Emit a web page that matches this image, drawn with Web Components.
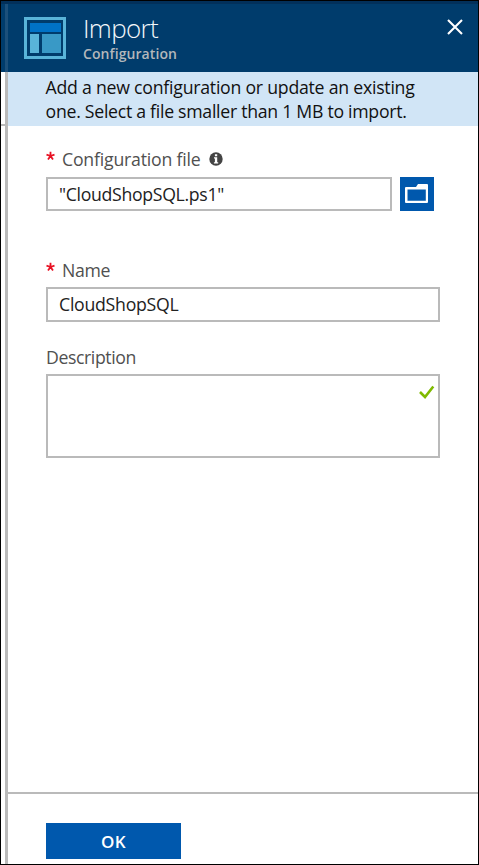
<!DOCTYPE html>
<html lang="en"><head><meta charset="utf-8"><title>Import Configuration</title>
<style>
html,body{margin:0;height:100%}
body{font-family:"Open Sans","Noto Sans",sans-serif;font-size:17.7px;overflow:hidden}
</style></head><body>
<import-blade></import-blade>
<script>
// A single line of text whose tracking is adjusted to a given width.
class FitText extends HTMLElement{
  connectedCallback(){
    const root=this.attachShadow({mode:'open'});
    root.innerHTML='<style>:host{display:block;white-space:nowrap;width:max-content}span{display:block}</style><span><slot></slot></span>';
    const s=root.querySelector('span'),w=+this.getAttribute('width'),n=this.textContent.length;
    s.style.letterSpacing=((w-s.getBoundingClientRect().width)/n)+'px';
  }
}
customElements.define('fit-text',FitText);

const define=(name,html)=>customElements.define(name,class extends HTMLElement{
  constructor(){super();this.attachShadow({mode:'open'}).innerHTML=html}
});

define('blade-header',`<style>
:host{display:flex;box-sizing:border-box;height:71px;background:#003c6c;border-top:3px solid #02305a;color:#fff}
.edge{width:3px;margin-left:4px;background:#1c507b}
.logo{margin:13px 0 0 16.4px;width:42px;height:42px}
.titles{flex:1;padding-left:16.6px}
h1{margin:8px 0 0;font-weight:300;font-size:26px;line-height:32px;color:#f4f8fb}
h2{margin:1px 0 0;font-size:14px;font-weight:600;line-height:18px;color:#b3b7bb}
.close{margin:15px 15px 0 0;width:16px;height:16px}
</style>
<div class="edge"></div>
<svg class="logo" viewBox="0 0 42 42"><path fill="#59b4d9" fill-rule="evenodd" d="M0 0h42v42H0zM3 3v36h36V3z"/><path fill="#0072c6" d="M6 6h31v9H6z"/><path fill="#59b4d9" d="M6 17h9v19H6z"/><path fill="#3999c6" d="M18 17h19v19H18z"/></svg>
<div class="titles"><h1><fit-text width="75">Import</fit-text></h1><h2><fit-text width="94">Configuration</fit-text></h2></div>
<svg class="close" viewBox="0 0 16 16"><path d="M1 1l14 14M15 1L1 15" stroke="#fff" stroke-width="2.1"/></svg>`);

define('info-band',`<style>:host{display:block;box-sizing:border-box;height:54px;padding:3px 0 0 37.6px;background:#d1e5f6;color:#111;line-height:24px}</style><slot></slot>`);

define('field-label',`<style>
:host{display:flex;align-items:center;height:24px;color:#505050}
b{display:none;width:10px;height:24px;margin-right:6px}
:host([required]) b{display:block}
svg{display:block}
.info{display:none;margin-left:8.5px}
:host([info]) .info{display:block}
</style><b><svg width="10" height="24" viewBox="0 0 10 24"><path d="M4.5 9V4.8M4.5 9L.5 7.7M4.5 9l4-1.3M4.5 9L2 12.5M4.5 9L7 12.5" fill="none" stroke="#e81123" stroke-width="1.8"/></svg></b><slot></slot>
<svg class="info" width="14" height="14" viewBox="0 0 14 14"><circle cx="7" cy="7" r="6.7" fill="#444"/><path fill="#fff" d="M5.9 2.2h2.3v2H5.9zM5 5.3h3.2v5h1v1.3H4.9v-1.3h1V6.5H5z"/></svg>`);

define('text-box',`<style>
:host{display:block;box-sizing:border-box;height:34px;border:2px solid #bababa;background:#fff;padding-left:11px;line-height:30px;color:#222;position:relative}
</style><slot></slot>`);

define('browse-button',`<style>:host{display:block;width:34px;height:34px;background:#0058ad}svg{display:block}</style>
<svg width="34" height="34" viewBox="0 0 34 34"><path fill="#fff" fill-rule="evenodd" d="M6 10h10l2-3h9q1 0 1 1v17q0 1-1 1H6q-1 0-1-1V11q0-1 1-1zM7.5 12.5v11.3h18.3V12.5z"/></svg>`);

define('ok-button',`<style>:host{display:flex;align-items:center;justify-content:center;width:135px;height:36px;background:#0058ad;color:#fff;font-weight:600;font-size:17px}</style><slot></slot>`);

define('import-blade',`<style>
:host{display:flex;flex-direction:column;box-sizing:border-box;width:479px;height:865px;border:1px solid #000;background:#fff}
.body{display:flex;flex:1;min-height:0}
.gutter{box-sizing:border-box;width:4px;padding-top:52px}
.gutter i{display:block;height:2px;background:#bababa}
.rule{width:3px;background:#bababa}
main{flex:1;display:flex;flex-direction:column}
form{flex:1;margin:0;padding:21px 38px 0}
.row{display:flex;gap:8px;margin-top:6px}
.row text-box{width:346px}
.name{margin-top:47px}
.name-box{height:35px;margin-top:5px;line-height:31px}
.desc{margin-top:23px}
.area{height:84px;margin-top:5px}
.area svg{position:absolute;right:3px;top:9px}
footer{box-sizing:border-box;height:72px;border-top:2px solid #bababa;padding:29px 0 0 38px}
</style>
<blade-header></blade-header>
<div class="body"><div class="gutter"><i></i></div><div class="rule"></div><main>
<info-band><fit-text width="369">Add a new configuration or update an existing</fit-text><fit-text width="361">one. Select a file smaller than 1 MB to import.</fit-text></info-band>
<form>
<field-label required info><fit-text width="138.5">Configuration file</fit-text></field-label>
<div class="row"><text-box><fit-text width="165">"CloudShopSQL.ps1"</fit-text></text-box><browse-button></browse-button></div>
<field-label class="name" required><fit-text width="48">Name</fit-text></field-label>
<text-box class="name-box" style="width:394px"><fit-text width="119.5">CloudShopSQL</fit-text></text-box>
<field-label class="desc"><fit-text width="90">Description</fit-text></field-label>
<text-box class="area" style="width:394px"><svg width="16" height="14" viewBox="0 0 16 14"><path d="M1 7l5 5L14.3 1.5" fill="none" stroke="#7fba00" stroke-width="2.6"/></svg></text-box>
</form>
<footer><ok-button><fit-text width="25">OK</fit-text></ok-button></footer>
</main></div>`);
</script></body></html>
